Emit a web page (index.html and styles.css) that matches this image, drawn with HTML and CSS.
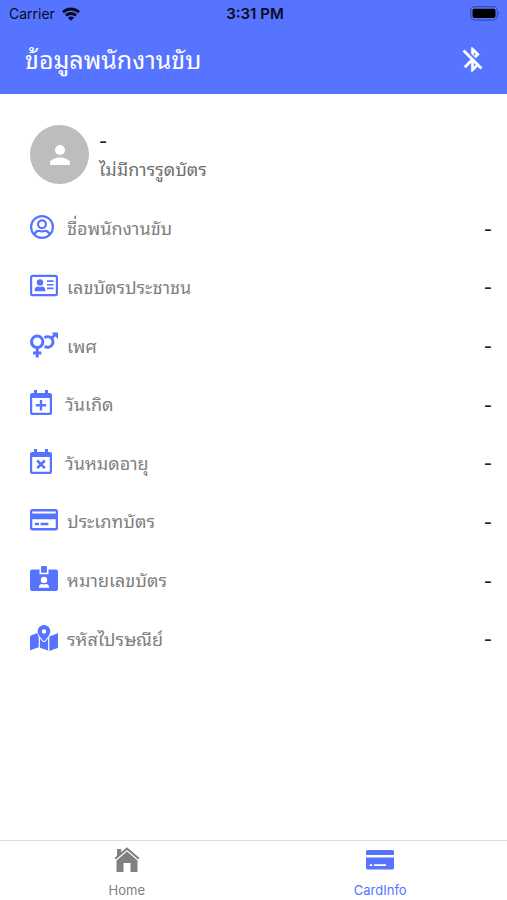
FILE: index.html
```
<!DOCTYPE html>
<html lang="th">
<head>
<meta charset="utf-8">
<meta name="viewport" content="width=device-width, initial-scale=1">
<title>ข้อมูลพนักงานขับ</title>
<link rel="stylesheet" href="styles.css">
</head>
<body>
<header class="top">
  <div class="status">
    <div class="carrier">Carrier
      <svg width="18" height="14" viewBox="0 0 18 14" aria-hidden="true"><g fill="none" stroke="currentColor" stroke-width="2.800"><path d="M1 5.200C5.500.9 12.500.9 17 5.200"/><path d="M3.900 8.600C6.800 5.800 11.200 5.800 14.100 8.600"/></g><path d="M9 13.800L5.900 10.700C7.600 9.200 10.400 9.200 12.100 10.700Z" fill="currentColor"/></svg>
    </div>
    <div class="time">3:31 PM</div>
    <svg class="battery" width="31" height="15" viewBox="0 0 31 15" aria-hidden="true"><rect x=".7" y=".7" width="26.600" height="13.400" rx="4" fill="none" stroke="#3a4cb4" stroke-width="1.200"/><rect x="2.500" y="2.700" width="23" height="9.400" rx="2" fill="#000"/><path d="M28.500 5.200q2.200 2.200 0 4.400z" fill="#3a4cb4"/></svg>
  </div>
  <div class="bar">
    <h1>ข้อมูลพนักงานขับ</h1>
    <button class="bluetooth" type="button" aria-label="Bluetooth">
      <svg width="29" height="29" viewBox="0 0 24 24" fill="currentColor" stroke="currentColor" stroke-width=".4"><path d="M13 5.830l1.880 1.880-1.600 1.600 1.410 1.410 3.020-3.020L12 2h-1v5.030l2 2v-3.200zM5.410 4L4 5.410 10.590 12 5 17.590 6.410 19 11 14.410V22h1l4.290-4.290 2.300 2.290L20 18.590 5.410 4zM13 18.170v-3.760l1.880 1.880L13 18.170z"/></svg>
    </button>
  </div>
</header>
<main>
  <section class="profile">
    <div class="avatar"><svg width="30" height="30" viewBox="0 0 24 24" fill="#fff" aria-hidden="true"><circle cx="12" cy="8" r="4"/><path d="M12 14c-2.670 0-8 1.340-8 4v2h16v-2c0-2.660-5.330-4-8-4z"/></svg></div>
    <div class="holder">
      <p class="name">-</p>
      <p class="state">ไม่มีการรูดบัตร</p>
    </div>
  </section>
  <dl class="fields">
    <div class="field">
      <dt><svg width="28" height="24" viewBox="0 0 28 24" aria-hidden="true"><g fill="none" stroke="currentColor" stroke-width="2.200"><circle cx="12" cy="12" r="10.900"/><circle cx="12" cy="9.300" r="3.900"/><path d="M4.500 19.300c1.300-3 3.300-3.700 4.800-3.300 1.900.5 3.500.5 5.400 0 1.500-.4 3.500.3 4.800 3.300"/></g></svg>ชื่อพนักงานขับ</dt><dd>-</dd>
    </div>
    <div class="field">
      <dt><svg width="28" height="24" viewBox="0 0 28 24" aria-hidden="true"><rect x="1.100" y="1.800" width="25.800" height="19.400" rx="1.800" fill="none" stroke="currentColor" stroke-width="2.200"/><g fill="currentColor"><circle cx="10" cy="8.400" r="3.200"/><path d="M4.700 17.200v-1.200c0-2.200 1.500-3.500 3.300-3.500 1.300.6 2.700.6 4 0 1.800 0 3.300 1.300 3.300 3.500v1.200z"/><path d="M17 6.200h6.500v1.700H17zM17 9.900h6.500v1.700H17zM17 13.600h6.500v1.700H17z"/></g></svg>เลขบัตรประชาชน</dt><dd>-</dd>
    </div>
    <div class="field">
      <dt><svg width="28" height="26" viewBox="0 0 28 26" aria-hidden="true"><g fill="none" stroke="currentColor" stroke-width="3"><circle cx="7.200" cy="9.800" r="5.700"/><path d="M7.200 15.500v10M3 21h8.400"/><path d="M14.500 5.700a5.300 5.300 0 1 1 .2 8.600"/><path d="M21.200 6.600L26 1.800" stroke-width="2.800"/></g><path d="M21.500.5H28V7z" fill="currentColor"/></svg>เพศ</dt><dd>-</dd>
    </div>
    <div class="field">
      <dt><svg width="26" height="26" viewBox="0 0 26 26" aria-hidden="true"><path fill="currentColor" fill-rule="evenodd" d="M4 0h3v3h8V0h3v3h2a2 2 0 0 1 2 2v18a2 2 0 0 1-2 2H2a2 2 0 0 1-2-2V5a2 2 0 0 1 2-2h2zM2.200 8v14.200q0 .6.600.6h16.400q.6 0 .6-.6V8z"/><path d="M11 10v10.500M5.800 15.200h10.400" stroke="currentColor" stroke-width="2.400"/></svg>วันเกิด</dt><dd>-</dd>
    </div>
    <div class="field">
      <dt><svg width="26" height="26" viewBox="0 0 26 26" aria-hidden="true"><path fill="currentColor" fill-rule="evenodd" d="M4 0h3v3h8V0h3v3h2a2 2 0 0 1 2 2v18a2 2 0 0 1-2 2H2a2 2 0 0 1-2-2V5a2 2 0 0 1 2-2h2zM2.200 8v14.200q0 .6.600.6h16.400q.6 0 .6-.6V8z"/><path d="M7.200 11.500l7.600 7.600M14.800 11.500l-7.600 7.600" stroke="currentColor" stroke-width="2.600"/></svg>วันหมดอายุ</dt><dd>-</dd>
    </div>
    <div class="field">
      <dt><svg width="28" height="24" viewBox="0 0 28 24" aria-hidden="true"><path fill="currentColor" fill-rule="evenodd" d="M2.500 1h23A2.500 2.500 0 0 1 28 3.500v16.500a2.500 2.500 0 0 1-2.500 2.500h-23A2.500 2.500 0 0 1 0 20V3.500A2.500 2.500 0 0 1 2.500 1zM2.300 3.400v2.200h23.400V3.400zM2.300 11.200v8.800h23.400v-8.800zM4.800 14.800h4.200v2.400H4.800zM10.600 14.800h7.800v2.400h-7.800z"/></svg>ประเภทบัตร</dt><dd>-</dd>
    </div>
    <div class="field">
      <dt><svg width="28" height="26" viewBox="0 0 28 26" aria-hidden="true"><g fill="currentColor"><rect x="11" y="0" width="6" height="6.800" rx="1"/><path fill-rule="evenodd" d="M2 3.500h7.500V8.300h9V3.500H26a2 2 0 0 1 2 2v17.500a2 2 0 0 1-2 2H2a2 2 0 0 1-2-2V5.500a2 2 0 0 1 2-2zM14 10.700a3.200 3.200 0 1 0 0 6.400 3.200 3.200 0 0 0 0-6.400zM8.800 21.700h10.400c0-2.500-1.500-3.700-3.200-3.700-1.300.5-2.700.5-4 0-1.700 0-3.200 1.200-3.200 3.700z"/></g></svg>หมายเลขบัตร</dt><dd>-</dd>
    </div>
    <div class="field">
      <dt><svg width="28" height="26" viewBox="0 0 28 26" aria-hidden="true"><g fill="currentColor"><path fill-rule="evenodd" d="M14 0a6.300 6.300 0 0 1 6.300 6.300c0 3.200-3.300 6.900-5.500 9.400q-.8.800-1.600 0C11 13.200 7.700 9.500 7.700 6.300A6.300 6.300 0 0 1 14 0zM14 4.200a2.200 2.200 0 1 0 0 4.400 2.200 2.200 0 0 0 0-4.400z"/><path d="M0 12q0-1 1-1.500l6.400-2.600q.3 2 1.300 3.500v10.800L1 25.100q-1 .3-1-.7zM9.900 13.200l2.400 3q1.700 1.700 3.400 0l2.400-3v12.200l-8.200-2.700zM19.300 11.600L27 8.400q1-.3 1 .7V21.700q0 1-1 1.500l-7.700 2.700z"/></g></svg>รหัสไปรษณีย์</dt><dd>-</dd>
    </div>
  </dl>
</main>
<nav class="tabs">
  <a href="#home"><svg width="28" height="28" viewBox="0 0 28 28" fill="currentColor" aria-hidden="true"><path d="M4 3h4.200v4.200L4 11z"/><path d="M14 1.200L26.500 12l-1.300 1.600L14 4 2.800 13.600 1.500 12z"/><path d="M14 5.500l10.500 9V26h-7v-9h-7v9h-7V14.500z"/></svg>Home</a>
  <a class="active" href="#card"><svg width="28" height="28" viewBox="0 0 28 28" fill="currentColor" aria-hidden="true"><path d="M1.500 4h25Q28 4 28 5.500V9H0V5.500Q0 4 1.500 4z"/><path fill-rule="evenodd" d="M0 11.500h28V22q0 1.500-1.500 1.500h-25Q0 23.500 0 22zM3.700 18.200v1.800h2.600v-1.800zM8 18.200v1.800h12v-1.800z"/></svg>CardInfo</a>
</nav>
</body>
</html>
```
FILE: styles.css
```
* { box-sizing: border-box; }
body {
  margin: 0;
  min-height: 100vh;
  display: flex;
  flex-direction: column;
  background: #fff;
  color: #808080;
  font-family: Inter, "Noto Sans Thai Looped", "Noto Sans Thai", sans-serif;
}
h1, p, dl, dd { margin: 0; }
.top { background: #5674ff; }
.status {
  display: grid;
  grid-template-columns: 1fr auto 1fr;
  align-items: center;
  height: 27px;
  padding: 0 6px 0 9px;
  color: #080b20;
  font-size: 14px;
}
.carrier { display: flex; align-items: center; gap: 7px; }
.time { font-size: 15px; font-weight: 600; }
.battery { justify-self: end; }
.bar {
  display: flex;
  align-items: center;
  justify-content: space-between;
  height: 67px;
  padding: 0 20px 2px 25px;
  color: #fff;
}
h1 { font-size: 25px; font-weight: 400; line-height: 36px; }
.bluetooth {
  display: flex;
  padding: 0;
  border: 0;
  background: none;
  color: inherit;
}
main { flex: 1; padding: 31px 15px 0 30px; }
.profile { display: flex; align-items: center; gap: 10px; }
.avatar {
  display: flex;
  align-items: center;
  justify-content: center;
  width: 59px;
  height: 59px;
  border-radius: 50%;
  background: #bdbdbd;
}
.holder { padding-top: 3px; }
.name { color: #222; font-size: 18px; font-weight: 500; line-height: 28px; }
.state { color: #707070; font-size: 18px; line-height: 28px; }
.fields {
  display: grid;
  grid-auto-rows: 1fr;
  height: 469px;
  margin-top: 16px;
}
.field { display: flex; align-items: center; justify-content: space-between; }
dt { display: flex; align-items: center; gap: 9px; font-size: 18px; line-height: 28px; }
dt svg { margin-bottom: 4px; color: #5674ff; }
dd { color: #222; font-size: 18px; font-weight: 500; }
.tabs {
  display: grid;
  grid-template-columns: 1fr 1fr;
  height: 60px;
  border-top: 1px solid #dcdcdc;
}
.tabs a {
  display: flex;
  flex-direction: column;
  align-items: center;
  gap: 6px;
  padding-top: 5px;
  color: #808080;
  font-size: 13px;
  line-height: 20px;
  text-decoration: none;
}
.tabs .active { color: #5674ff; }
```
